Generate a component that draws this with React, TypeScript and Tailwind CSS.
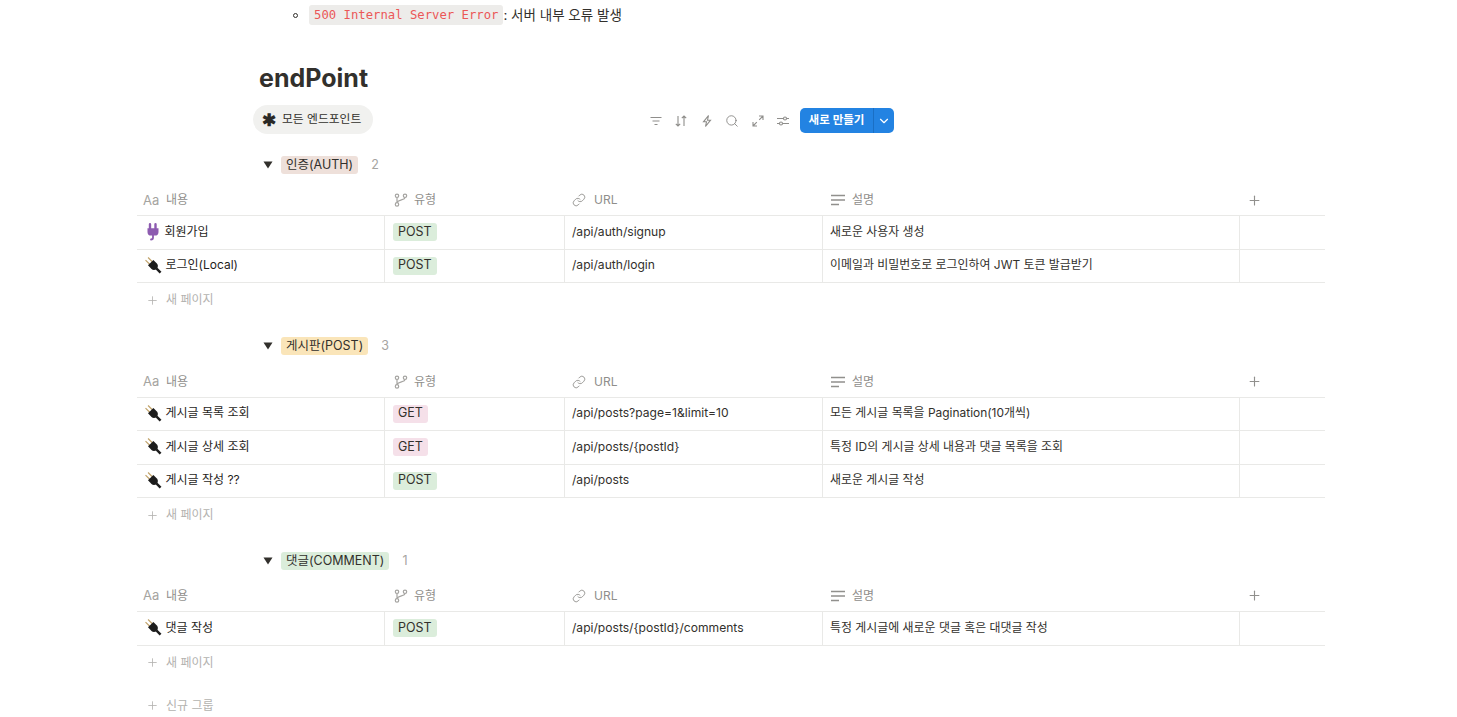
import React from 'react';
import { Link, Plus, Search, ChevronDown } from 'lucide-react';

const FONT = "font-['Inter','Noto_Sans_CJK_KR',sans-serif]";

const PurplePlug = () => (
  <svg width="16" height="18" viewBox="0 0 16 18" className="shrink-0">
    <path d="M5 1.200v4.300M10.500 1.200v4.300" stroke="#8d5bb0" strokeWidth="2.400" strokeLinecap="round" />
    <path d="M2.500 5.200h11v3.700a3.600 3.600 0 0 1-3.600 3.600H6.100a3.600 3.600 0 0 1-3.600-3.600z" fill="#8d5bb0" />
    <path d="M8 12v2.800c0 1.100-.6 1.700-2 1.700" fill="none" stroke="#8d5bb0" strokeWidth="1.800" strokeLinecap="round" />
  </svg>
);

const BlackPlug = () => (
  <svg width="17" height="17" viewBox="0 0 17 17" className="shrink-0">
    <g transform="rotate(-45 8.500 8.500)">
      <path d="M6.700 -1v6M10.300 -1v6" stroke="#c2a46c" strokeWidth="1.200" />
      <path d="M4.700 4.500h7.600v5c0 2-1.600 3.500-3.800 3.500s-3.800-1.500-3.800-3.500z" fill="#1c1c1c" />
      <path d="M8.500 12.500v6" stroke="#1c1c1c" strokeWidth="2.400" />
    </g>
  </svg>
);

const BranchIcon = () => (
  <svg width="14" height="14" viewBox="0 0 14 14" fill="none" stroke="#a5a4a1" strokeWidth="1.200">
    <circle cx="3" cy="2.800" r="1.700" />
    <circle cx="3" cy="11.400" r="1.700" />
    <circle cx="11" cy="2.800" r="1.700" />
    <path d="M3 4.500v5.200M11 4.500c0 2.600-6 2-8 4.600" />
  </svg>
);

const TextIcon = () => (
  <svg width="16" height="12" viewBox="0 0 16 12" fill="none" stroke="#91908d" strokeWidth="1.300">
    <path d="M1 1.500h14M1 6h14M1 10.500h8" />
  </svg>
);

const HeaderCell = ({ icon, label, className }: { icon: React.ReactNode; label: string; className: string }) => (
  <div className={`flex items-center gap-[6px] text-[12px] text-[#8f8e8b] ${className}`}>
    {icon}
    <span>{label}</span>
  </div>
);

const Tag = ({ label, color }: { label: string; color: string }) => (
  <span className={`inline-flex h-[18px] items-center rounded-[3px] px-[5px] text-[12.500px] text-[#32302c] ${color}`}>{label}</span>
);

type Row = { icon: React.ReactNode; name: string; method: 'POST' | 'GET'; url: string; desc: string };

const Group = ({ tag, tagColor, count, rows, headerGap, className }: {
  tag: string; tagColor: string; count: number; rows: Row[]; headerGap: string; className: string;
}) => (
  <section className={className}>
    <div className="flex h-[18px] items-center pl-[126px]">
      <svg width="10" height="8" viewBox="0 0 10 8" className="mr-[8px]"><path d="M0.500 0.500h9L5 7.500z" fill="#32302c" /></svg>
      <Tag label={tag} color={tagColor} />
      <span className="ml-[13px] text-[12.500px] text-[#a5a4a1]">{count}</span>
    </div>
    <div className={`flex h-[33px] items-center border-b border-[#e9e9e7] ${headerGap}`}>
      <HeaderCell className="w-[247px] pl-[6px]" label="내용" icon={<span className="w-[17px] text-[13px] leading-none text-[#a5a4a1]">Aa</span>} />
      <HeaderCell className="w-[180px] pl-[10px]" label="유형" icon={<BranchIcon />} />
      <HeaderCell className="w-[258px] pl-[8px]" label="URL" icon={<Link size={14} strokeWidth={1.500} color="#91908d" className="mr-[2px]" />} />
      <HeaderCell className="w-[417px] pl-[8px]" label="설명" icon={<TextIcon />} />
      <div className="w-[86px] pl-[8px] text-[#91908d]"><Plus size={15} strokeWidth={1.800} /></div>
    </div>
    {rows.map((r) => (
      <div key={r.name} className="flex h-[33.500px] border-b border-[#e9e9e7] text-[12px] text-[#32302c]">
        <div className="flex w-[247px] items-center gap-[3.500px] pb-[1px] pl-[8px] text-[#1f1e1c]">
          {r.icon}
          <span>{r.name}</span>
        </div>
        <div className="flex w-[180px] items-center border-l border-[#e9e9e7] px-[8px]">
          <Tag label={r.method} color={r.method === 'POST' ? 'bg-[#dbeddb]' : 'bg-[#f5e0e9]'} />
        </div>
        <div className="flex w-[258px] items-center border-l border-[#e9e9e7] pb-[1px] pl-[7px] text-[12.100px]">{r.url}</div>
        <div className="flex w-[417px] items-center border-l border-[#e9e9e7] pb-[1px] pl-[7px] text-[11.950px]">{r.desc}</div>
        <div className="w-[86px] border-l border-[#e9e9e7]" />
      </div>
    ))}
    <div className="flex h-[33px] items-center gap-[7px] pl-[9px] pt-[1px] text-[12px] text-[#b3b2af]">
      <Plus size={13} strokeWidth={1.500} />
      <span>새 페이지</span>
    </div>
  </section>
);

const ToolIcon = ({ children }: { children: React.ReactNode }) => (
  <svg width="14" height="14" viewBox="0 0 14 14" fill="none" stroke="#8f8e8b" strokeWidth="1.100">{children}</svg>
);

export default function App() {
  return (
    <div className={`h-[717px] w-[1457px] overflow-hidden bg-white ${FONT} antialiased`}>
      <div className="ml-[259px] flex h-[30px] items-center pl-[34px] text-[13.500px] text-[#32302c]">
        <span className="mr-[11px] h-[5px] w-[5px] rounded-full border border-[#32302c]" />
        <code className="rounded-[3px] bg-[#edecea] px-[5px] py-[1px] font-['DejaVu_Sans_Mono',monospace] text-[12.250px] text-[#eb5757]">500 Internal Server Error</code>
        <span>: 서버 내부 오류 발생</span>
      </div>

      <h1 className="ml-[259px] mt-[30px] text-[25px] font-bold leading-[36px] text-[#32302c]">endPoint</h1>

      <div className="ml-[253px] mt-[9px] flex w-[641px] items-start justify-between">
        <div className="flex h-[29px] w-[120px] items-center gap-[7px] rounded-full bg-[#f1f1ef] pl-[9px] pt-[1px] text-[11.800px] text-[#32302c]">
          <span className="flex w-[13px] justify-center text-[17px] font-bold leading-none text-[#2a2926]">✱</span>
          <span>모든 엔드포인트</span>
        </div>
        <div className="mt-[3px] flex items-center">
          <div className="mr-[10px] flex items-center gap-[11.500px]">
            <ToolIcon><path d="M1.500 3.500h11M3.500 7h7M5.500 10.500h3" /></ToolIcon>
            <ToolIcon><path d="M4 2v10M1.800 9.800L4 12l2.200-2.200M10 12V2M7.800 4.200L10 2l2.200 2.200" /></ToolIcon>
            <ToolIcon><path d="M8.500 1.500L3.500 7.800h3l-1 4.700 5-6.300h-3z" /></ToolIcon>
            <Search size={14} strokeWidth={1.400} color="#7d7c79" />
            <ToolIcon><path d="M8 2h4v4M12 2L8.200 5.800M6 12H2V8M2 12l3.800-3.800" /></ToolIcon>
            <ToolIcon>
              <path d="M1 4.500h6.500M10.500 4.500H13M1 9.500h2.500M6.500 9.500H13" />
              <circle cx="9" cy="4.500" r="1.500" />
              <circle cx="5" cy="9.500" r="1.500" />
            </ToolIcon>
          </div>
          <div className="flex h-[25px] items-center rounded-[5px] bg-[#2383e2] text-[11.500px] font-semibold text-white">
            <span className="flex h-full w-[74px] items-center justify-center border-r border-[#1a6fc4]">새로 만들기</span>
            <span className="flex w-[20px] justify-center"><ChevronDown size={14} strokeWidth={2} /></span>
          </div>
        </div>
      </div>

      <div className="ml-[137px] w-[1188px]">
        <Group className="mt-[22px]" headerGap="mt-[9px] pt-[2px]" tag="인증(AUTH)" tagColor="bg-[#eee0da]" count={2} rows={[
          { icon: <PurplePlug />, name: '회원가입', method: 'POST', url: '/api/auth/signup', desc: '새로운 사용자 생성' },
          { icon: <BlackPlug />, name: '로그인(Local)', method: 'POST', url: '/api/auth/login', desc: '이메일과 비밀번호로 로그인하여 JWT 토큰 발급받기' },
        ]} />
        <Group className="mt-[21px]" headerGap="mt-[9.500px] pt-[2px]" tag="게시판(POST)" tagColor="bg-[#fae5b9]" count={3} rows={[
          { icon: <BlackPlug />, name: '게시글 목록 조회', method: 'GET', url: '/api/posts?page=1&limit=10', desc: '모든 게시글 목록을 Pagination(10개씩)' },
          { icon: <BlackPlug />, name: '게시글 상세 조회', method: 'GET', url: '/api/posts/{postId}', desc: '특정 ID의 게시글 상세 내용과 댓글 목록을 조회' },
          { icon: <BlackPlug />, name: '게시글 작성 ??', method: 'POST', url: '/api/posts', desc: '새로운 게시글 작성' },
        ]} />
        <Group className="mt-[21px]" headerGap="mt-[9px] pt-[1px]" tag="댓글(COMMENT)" tagColor="bg-[#dbeddb]" count={1} rows={[
          { icon: <BlackPlug />, name: '댓글 작성', method: 'POST', url: '/api/posts/{postId}/comments', desc: '특정 게시글에 새로운 댓글 혹은 대댓글 작성' },
        ]} />
        <div className="mt-[10px] flex h-[33px] items-center gap-[7px] pl-[9px] pt-[1px] text-[12px] text-[#b3b2af]">
          <Plus size={13} strokeWidth={1.500} />
          <span>신규 그룹</span>
        </div>
      </div>
    </div>
  );
}
